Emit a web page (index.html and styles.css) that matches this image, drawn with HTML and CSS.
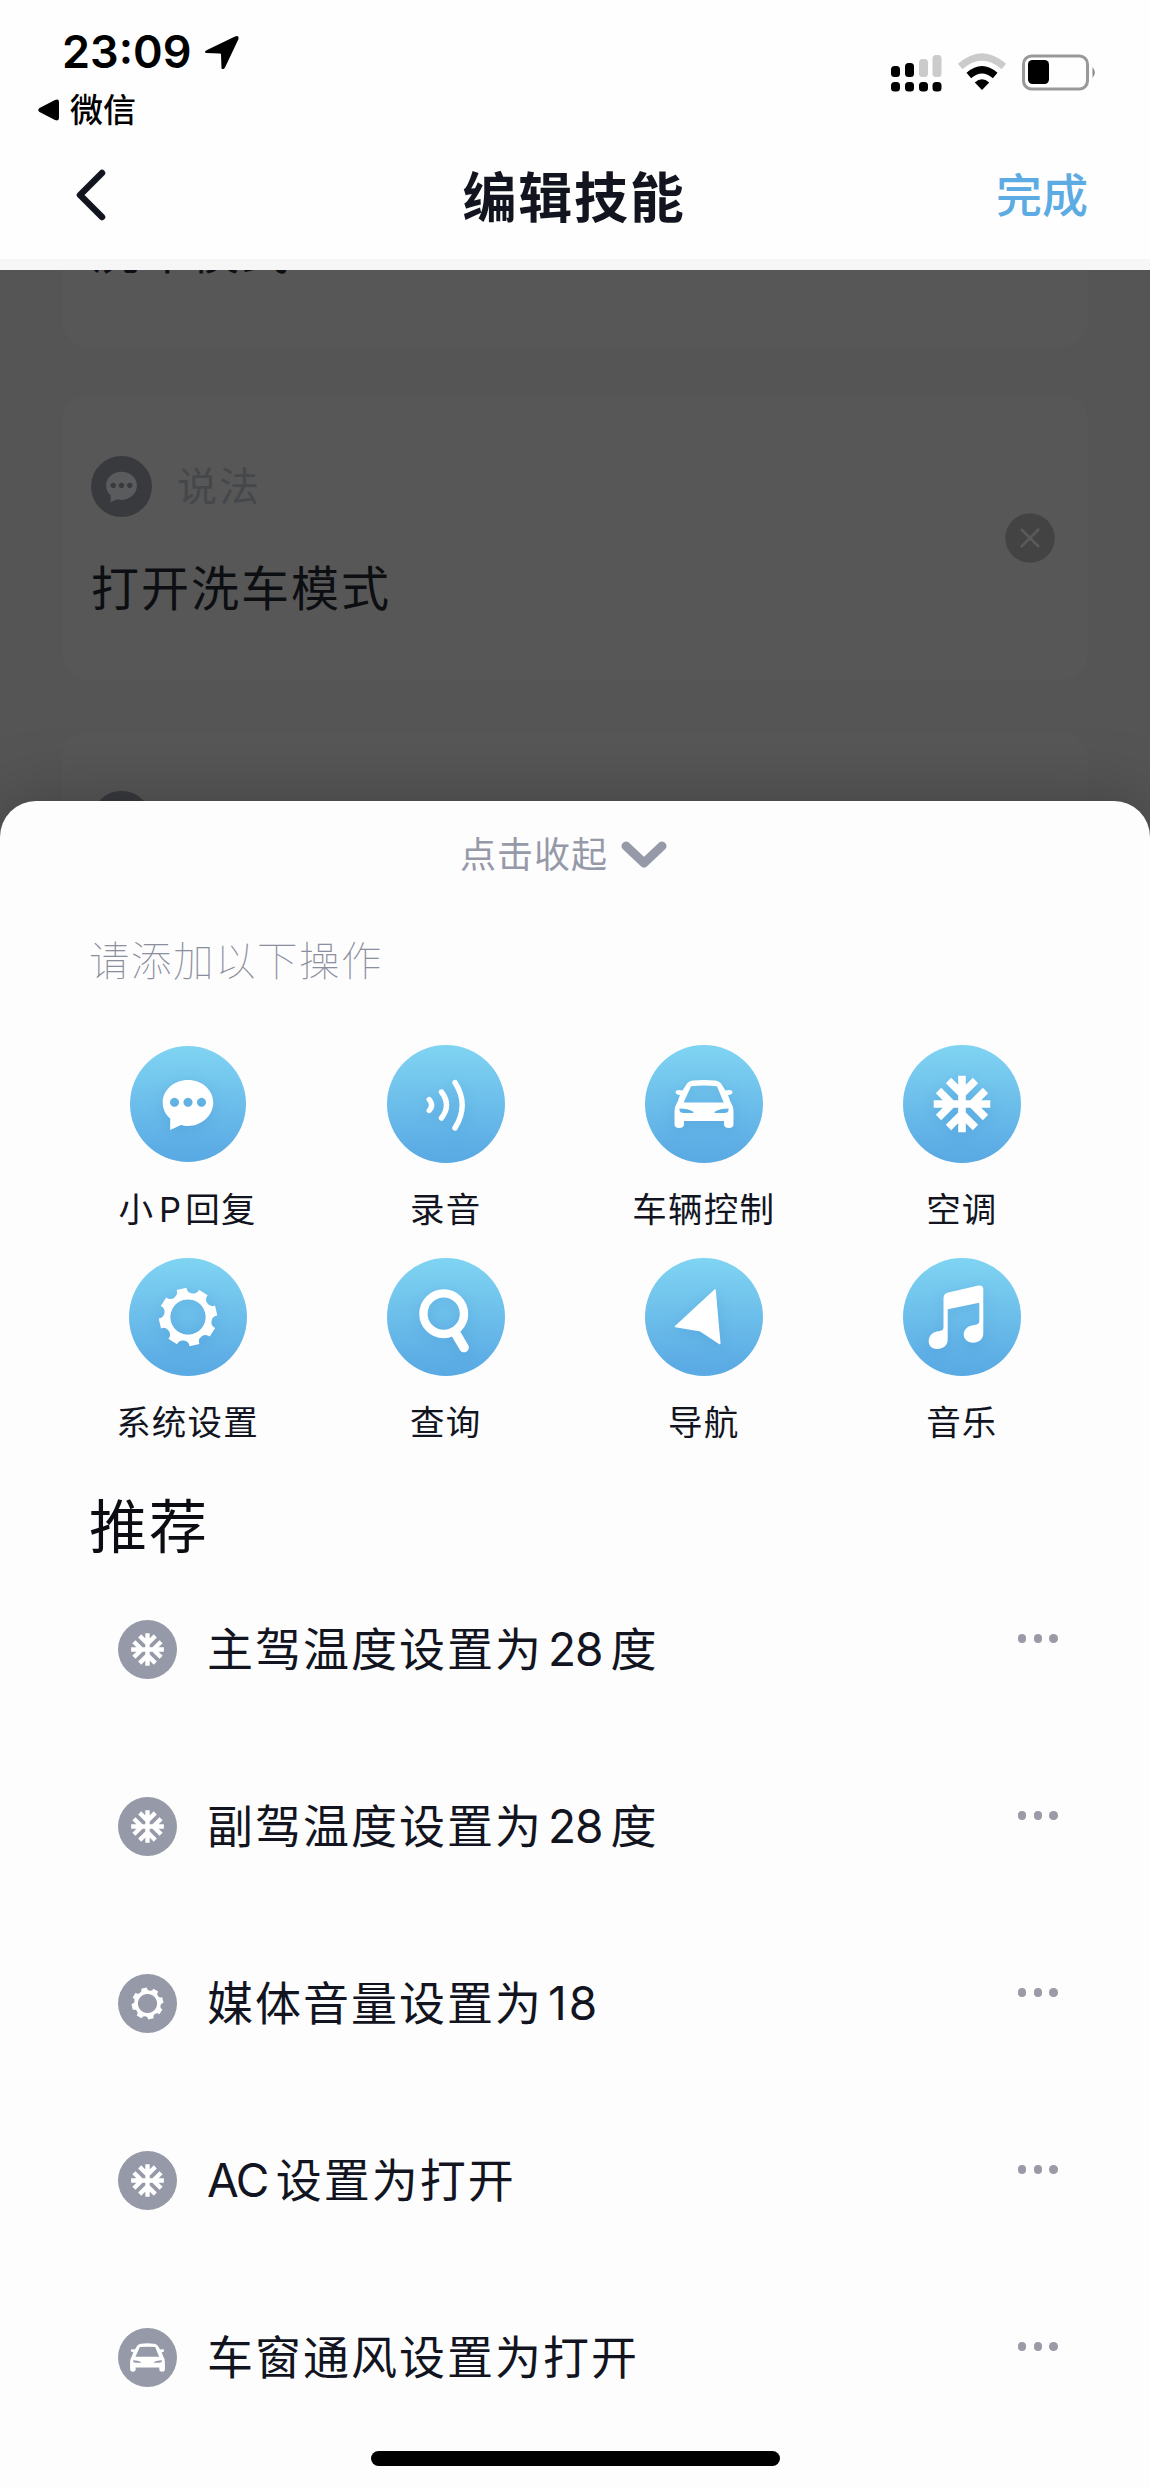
FILE: index.html
```html
<!DOCTYPE html>
<html lang="zh-CN">
<head>
<meta charset="utf-8">
<title>编辑技能</title>
<link rel="stylesheet" href="styles.css">
</head>
<body>
<svg class="sprite" width="0" height="0" aria-hidden="true">
  <defs>
    <g id="i-bubble"><path fill="currentColor" fill-rule="evenodd" d="M0-24C14-24 25.3-14 25.3-1.5S14 22 0 22C-3 22-5 21.5-7 21L-17.8 26V14.500C-22.500 10.500-25.300 5-25.300-1.500C-25.300-14-14-24 0-24ZM-13.500-6.200a4.500 4.500 0 1 0 .01 0ZM0-6.200a4.500 4.500 0 1 0 .01 0ZM13.500-6.200a4.500 4.500 0 1 0 .01 0Z"/></g>
    <g id="i-wave" fill="none" stroke="currentColor" stroke-width="5.4" stroke-linecap="round"><path d="M9-21.500Q23.400 1 9 24M-4.500-12Q5.500 1 -4.500 14M-16.800-4.500Q-11.800 1 -16.800 6.500"/></g>
    <g id="i-car"><path fill="currentColor" fill-rule="evenodd" d="M-11-23.500Q0-24.500 11-23.500Q16-23 18-19L21.500-13.500Q28-15 28.500-12Q28.500-9.500 24-9L26.500-2Q29.500 2 29.500 8V20Q29.500 24 25 24Q20 24 20 20V17H-20V20Q-20 24-25 24Q-29.500 24-29.500 20V8Q-29.500 2-26.500-2L-24-9Q-28.500-9.500-28.500-12Q-28-15-21.500-13.500L-18-19Q-16-23-11-23.500ZM-13-17.800L-20.300-1.400H19.700L13-17.800Q0-19-13-17.800ZM-24.500 4.500V6Q-24.500 9-20 9H-12Q-9.500 9-11 7.500Q-16 4.500-24.500 4.500ZM24.500 4.500V6Q24.500 9 20 9H12Q9.500 9 11 7.500Q16 4.500 24.500 4.500Z"/></g>
    <g id="i-snow" fill="none" stroke="currentColor" stroke-width="7.6"><path stroke-linecap="butt" d="M0-28.300V28.300M-28.300 0H28.300M-13.500-23.500L0-10L13.500-23.500M-13.500 23.500L0 10L13.500 23.500M-23.500-13.500L-10 0L-23.500 13.500M23.500-13.500L10 0L23.500 13.500"/></g>
    <g id="i-gear"><path fill="currentColor" fill-rule="evenodd" d="M-11.400-27L-1.500-29.300A6.600 6.600 0 0 0 11-27.200L19.600-21.800A6.600 6.600 0 0 0 27-11.400L29.300-1.500A6.600 6.600 0 0 0 27.200 11L21.800 19.600A6.600 6.600 0 0 0 11.400 27L1.500 29.300A6.600 6.600 0 0 0 -11 27.200L-19.600 21.800A6.600 6.600 0 0 0 -27 11.400L-29.300 1.500A6.600 6.600 0 0 0 -27.200-11L-21.800-19.600A6.600 6.600 0 0 0 -11.400-27ZM0-17.600A17.600 17.600 0 1 0 .01-17.600Z"/></g>
    <g id="i-search" fill="none" stroke="currentColor"><circle cx="-2.300" cy="-3.300" r="20.300" stroke-width="8.400"/><path d="M9.500 16L18 30.500" stroke-width="9.600" stroke-linecap="round"/></g>
    <g id="i-nav"><path fill="currentColor" stroke="currentColor" stroke-width="1.500" stroke-linejoin="round" d="M11-27L15.800 26.500L-3.500 13.800L-28.500 9.500Z"/></g>
    <g id="i-music"><path fill="currentColor" fill-rule="evenodd" d="M-18.500-18.500Q-18.500-23.500-13.800-24.600L16.500-31.400Q21.300-32 21.300-27.500V16.500C21.300 22 17 25.700 11 25.700C5.500 25.700 1.700 22 1.700 17.500C1.700 12 6 9 11 8.200C15 7.600 17.300 7 17.300 4V-14.300L-14.300-7.700V22.500C-14.300 28.500-19 32-24.500 32C-30 32-33.300 29-33.300 24.500C-33.300 18-29 15-23.500 14.300C-20.500 13.800-18.500 13-18.500 10.500Z"/></g>
  </defs>
</svg>

<header class="top">
  <div class="status">
    <div class="status-left">
      <div class="clock"><span>23:09</span>
        <svg class="loc" viewBox="0 0 36 35"><path d="M3 15L31 1.500Q35-.5 34.500 4L21 32.500Q19.500 35 17.500 33.500L17 19.500Q17 18.500 16 18.500L2 18Q-.5 16.800 3 15Z"/></svg>
      </div>
      <div class="return"><svg class="tri" viewBox="0 0 21 22"><path d="M1.500 9L17 1Q21-.5 21 3V19Q21 22.500 17 21L1.500 13Q-1 11 1.500 9Z"/></svg><span>微信</span></div>
    </div>
    <svg class="signals" viewBox="0 0 206 37">
      <g><rect x="0" y="12" width="9" height="11" rx="3.500"/><rect x="14" y="9" width="9" height="14" rx="3.500"/><rect x="0" y="28" width="9" height="9.500" rx="3.500"/><rect x="14" y="28" width="9" height="9.500" rx="3.500"/><rect x="28" y="28" width="9" height="9.500" rx="3.500"/><rect x="41.500" y="28" width="9" height="9.500" rx="3.500"/></g>
      <g fill="#cbcbcb"><rect x="28" y="5" width="9" height="18" rx="3.500"/><rect x="41.500" y="1" width="9" height="22" rx="3.500"/></g>
      <path d="M69.200 12.500Q91 -6.500 112.800 12.500" fill="none" stroke="#cbcbcb" stroke-width="7"/>
      <path d="M77.800 21.500Q91 10 104.200 21.500" fill="none" stroke="#000" stroke-width="7"/>
      <path d="M83.800 28.500Q91 22 98.200 28.500L91 36Z"/>
      <rect x="132.500" y="2" width="64" height="33" rx="8" fill="none" stroke="#999" stroke-width="3"/>
      <rect x="137" y="6" width="21" height="24" rx="4.500"/>
      <path fill="#888" d="M201.500 13Q206 18.500 201.500 24Z"/>
    </svg>
  </div>
  <nav class="nav">
    <svg class="back" viewBox="0 0 30 52"><path d="M26 4L4 26L26 48"/></svg>
    <h1>编辑技能</h1>
    <span class="done">完成</span>
  </nav>
</header>

<main>
  <section class="backdrop">
    <article class="card card-cut"><p class="phrase">洗车模式</p></article>
    <article class="card">
      <div class="card-body">
        <div class="kind"><span class="dot-icon"><svg viewBox="-50 -50 100 100"><use href="#i-bubble"/></svg></span><span>说法</span></div>
        <p class="phrase">打开洗车模式</p>
      </div>
      <svg class="close" viewBox="0 0 50 50"><circle cx="25" cy="25" r="24.700" fill="#434343"/><path d="M16 16L34 34M34 16L16 34" stroke="#5a5a5a" stroke-width="2.500"/></svg>
    </article>
    <article class="card card-next"><span class="dot-icon"></span></article>
  </section>

  <section class="sheet">
    <div class="collapse"><span>点击收起</span><svg viewBox="0 0 46 28"><path d="M5 5L23 22L41 5"/></svg></div>
    <p class="hint">请添加以下操作</p>
    <div class="grid">
      <div class="tile"><span class="disc disc-s"><svg viewBox="-59 -59 118 118"><use href="#i-bubble"/></svg></span><span class="label">小<span class="p">P</span>回复</span></div>
      <div class="tile"><span class="disc"><svg viewBox="-59 -59 118 118"><use href="#i-wave"/></svg></span><span class="label">录音</span></div>
      <div class="tile"><span class="disc"><svg viewBox="-59 -59 118 118"><use href="#i-car"/></svg></span><span class="label">车辆控制</span></div>
      <div class="tile"><span class="disc"><svg viewBox="-59 -59 118 118"><use href="#i-snow"/></svg></span><span class="label">空调</span></div>
      <div class="tile"><span class="disc"><svg viewBox="-59 -59 118 118"><use href="#i-gear"/></svg></span><span class="label">系统设置</span></div>
      <div class="tile"><span class="disc"><svg viewBox="-59 -59 118 118"><use href="#i-search"/></svg></span><span class="label">查询</span></div>
      <div class="tile"><span class="disc"><svg viewBox="-59 -59 118 118"><use href="#i-nav"/></svg></span><span class="label">导航</span></div>
      <div class="tile"><span class="disc"><svg viewBox="-59 -59 118 118"><use href="#i-music"/></svg></span><span class="label">音乐</span></div>
    </div>
    <h2>推荐</h2>
    <ul class="list">
      <li><span class="mini"><svg viewBox="-51 -51 102 102"><use href="#i-snow"/></svg></span><span class="text">主驾温度设置为<span class="num">28</span>度</span><span class="more"><i></i><i></i><i></i></span></li>
      <li><span class="mini"><svg viewBox="-51 -51 102 102"><use href="#i-snow"/></svg></span><span class="text">副驾温度设置为<span class="num">28</span>度</span><span class="more"><i></i><i></i><i></i></span></li>
      <li><span class="mini"><svg viewBox="-54 -54 108 108"><use href="#i-gear"/></svg></span><span class="text">媒体音量设置为<span class="num num-wide">18</span></span><span class="more"><i></i><i></i><i></i></span></li>
      <li><span class="mini"><svg viewBox="-51 -51 102 102"><use href="#i-snow"/></svg></span><span class="text"><span class="latin">AC</span>设置为打开</span><span class="more"><i></i><i></i><i></i></span></li>
      <li><span class="mini"><svg viewBox="-50 -50 100 100"><use href="#i-car"/></svg></span><span class="text">车窗通风设置为打开</span><span class="more"><i></i><i></i><i></i></span></li>
    </ul>
    <div class="home"></div>
  </section>
</main>
</body>
</html>
```
FILE: styles.css
```css
* { box-sizing: border-box; margin: 0; padding: 0; }
body {
  width: 1150px;
  height: 2489px;
  overflow: hidden;
  background: #fdfdfd;
  color: #12151f;
  font-family: "Inter", "Noto Sans CJK SC", sans-serif;
}
svg { display: block; flex: none; }
.sprite { position: absolute; }

/* Header */
.top { height: 270px; background: #fefefe; border-bottom: 11px solid #f6f6f6; }
.status { height: 135px; display: flex; justify-content: space-between; padding: 29px 54px 0 38px; color: #000; }
.clock { display: flex; align-items: center; gap: 12px; height: 46px; padding-left: 24px; font-size: 45px; line-height: 46px; font-weight: 600; letter-spacing: 0; }
.loc { width: 36px; height: 35px; }
.return { display: flex; align-items: center; gap: 11px; height: 40px; margin-top: 15px; font-size: 33px; line-height: 40px; font-weight: 500; }
.tri { width: 21px; height: 22px; }
.signals { width: 206px; height: 37px; margin-top: 25px; margin-right: -1px; overflow: visible; }
.nav { height: 124px; display: grid; grid-template-columns: 200px 1fr 200px; align-items: center; padding: 0 62px 0 76px; }
.back { width: 30px; height: 52px; margin-top: -5px; fill: none; stroke: #12151f; stroke-width: 6.500; stroke-linecap: round; stroke-linejoin: round; }
h1 { padding-right: 16px; margin-top: 4px; text-align: center; font-size: 54px; line-height: 64px; font-weight: 700; letter-spacing: 1.800px; }
.done { text-align: right; margin-top: -4px; font-size: 46px; line-height: 60px; font-weight: 500; color: #5dabe3; }

/* Dimmed page behind the sheet */
.backdrop { height: 571px; overflow: hidden; background: #555; padding: 0 62px; display: flex; flex-direction: column; }
.card { flex: none; height: 285px; margin-bottom: 52px; padding: 0 33px 0 29px; border-radius: 26px; background: #575757; display: flex; align-items: center; justify-content: space-between; }
.card-cut { height: 77px; margin-bottom: 48px; border-radius: 0 0 26px 26px; align-items: flex-start; }
.card-cut .phrase { margin-top: -49px; }
.card-next { align-items: flex-start; padding-top: 59px; }
.card-body { padding-top: 1px; }
.kind { display: flex; align-items: center; gap: 25px; font-size: 40px; line-height: 61px; font-weight: 400; letter-spacing: 2px; color: #45484b; }
.dot-icon { flex: none; width: 61px; height: 61px; border-radius: 50%; background: #393a3e; color: #5a5b5d; }
.phrase { margin-top: 41px; font-size: 48px; line-height: 62px; letter-spacing: 2px; color: #0c0e12; }
.close { width: 50px; height: 50px; }

/* Bottom sheet */
.sheet { position: relative; height: 1688px; margin-top: -40px; padding-top: 28px; border-radius: 36px 36px 0 0; background: #fdfdfe; box-shadow: 0 0 70px rgba(0, 0, 0, .25); }
.collapse { display: flex; justify-content: center; align-items: center; gap: 13px; height: 52px; padding-right: 23px; font-size: 36px; line-height: 52px; letter-spacing: 1px; color: #9699a8; }
.collapse svg { width: 46px; height: 28px; fill: none; stroke: #9699a8; stroke-width: 9; stroke-linecap: round; stroke-linejoin: round; }
.hint { margin: 51px 0 0 89px; font-size: 40.500px; line-height: 60px; font-weight: 100; letter-spacing: 1.500px; color: #8b8e9c; }
.grid { display: grid; grid-template-columns: repeat(4, 258.100px); grid-auto-rows: 213px; margin: 53px 0 0 58.500px; }
.tile { display: flex; flex-direction: column; align-items: center; gap: 21.500px; }
.disc { width: 118px; height: 118px; border-radius: 50%; background: linear-gradient(#80d4f2, #5aaae4 95%); color: #fff; }
.disc svg { filter: drop-shadow(0 3px 7px rgba(40, 120, 190, .22)); }
.disc-s { width: 116px; height: 116px; margin: 1px; }
.disc-s svg { margin: -1px; width: 118px; height: 118px; }
.label { font-size: 34.500px; line-height: 50px; letter-spacing: 1.200px; white-space: nowrap; }
.p { margin: 0 3px 0 5px; }
h2 { margin: 16px 0 0 89px; font-size: 58px; line-height: 80px; font-weight: 400; letter-spacing: 2px; color: #0c0d12; }
.list { list-style: none; margin-top: 34px; padding: 0 92px 0 118px; }
.list li { display: flex; align-items: flex-start; height: 177px; padding-top: 19px; }
.mini { width: 59px; height: 59px; border-radius: 50%; background: #9699a8; color: #fff; }
.text { flex: 1; margin-left: 30px; font-size: 46px; line-height: 59px; letter-spacing: 2px; white-space: nowrap; }
.num { margin: 0 8px 0 5px; letter-spacing: -1px; }
.num-wide { letter-spacing: 2px; }
.latin { margin-right: 8px; letter-spacing: -1.500px; }
.more { display: flex; gap: 7.200px; padding-top: 14px; }
.more i { width: 8.600px; height: 8.600px; border-radius: 50%; background: #9b9ba8; }
.home { position: absolute; left: 371px; bottom: 23px; width: 409px; height: 15px; border-radius: 8px; background: #000; }
```
